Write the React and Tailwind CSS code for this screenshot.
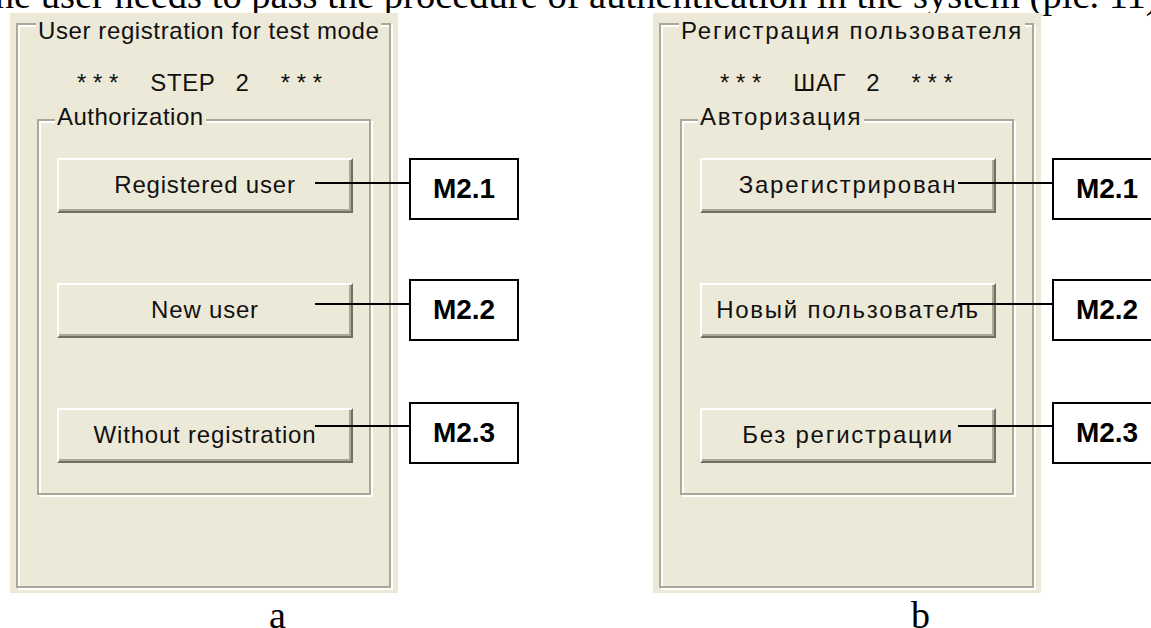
import React from 'react';

const SANS = "font-['Liberation_Sans',Arial,sans-serif]";
const SERIF = "font-['Liberation_Serif','Times_New_Roman',serif]";

const figures = [
  {
    caption: 'a',
    title: 'User registration for test mode',
    step: 'STEP',
    group: 'Authorization',
    buttons: ['Registered user', 'New user', 'Without registration'],
    titleTrack: 'tracking-[0.6px]',
    groupTrack: 'tracking-[0.5px]',
    btnTrack: 'tracking-[0.8px]',
  },
  {
    caption: 'b',
    title: 'Регистрация пользователя',
    step: 'ШАГ',
    group: 'Авторизация',
    buttons: ['Зарегистрирован', 'Новый пользователь', 'Без регистрации'],
    titleTrack: 'tracking-[1.8px]',
    groupTrack: 'tracking-[1.7px]',
    btnTrack: 'tracking-[1.75px]',
  },
];

const marks = ['M2.1', 'M2.2', 'M2.3'];
const markGaps = ['mt-[145px]', 'mt-[59px]', 'mt-[61px]'];
const leaderTops = ['top-[169px]', 'top-[290px]', 'top-[412px]'];

const WinButton = ({ label, track }) => (
  <div className={`w-[296px] h-[55px] flex items-center justify-center bg-[#ece9d8] border-2 border-t-white border-l-white border-r-[#716f64] border-b-[#716f64] shadow-[inset_-2px_-2px_0_#aca899] text-[24px] whitespace-nowrap text-[#111] ${track}`}>
    {label}
  </div>
);

const Figure = ({ fig }) => (
  <div className="flex flex-col w-[509px] shrink-0">
    <div className="relative flex gap-[11px]">
      {/* dialog panel */}
      <div className={`w-[388px] h-[580px] shrink-0 bg-[#ece9d8] pt-[10px] pl-[6px] pr-[7px] pb-[5px] ${SANS} text-[#111]`}>
        <div className="relative h-full border-2 border-[#aca899] shadow-[inset_2px_2px_0_#fff,2px_2px_0_#fff]">
          <span className={`absolute left-[18px] -top-[6px] px-[2px] bg-[#ece9d8] text-[24px] leading-none whitespace-nowrap ${fig.titleTrack}`}>
            {fig.title}
          </span>

          <div className="pt-[46px] pl-[59px] flex items-baseline text-[24px] leading-none">
            <span>* * *</span>
            <span className="ml-[32px] tracking-[0.6px]">{fig.step}</span>
            <span className="ml-[20px]">2</span>
            <span className="ml-[32px]">* * *</span>
          </div>

          <div className="relative mt-[24px] ml-[19px] w-[334px] h-[376px] border-2 border-[#aca899] shadow-[inset_2px_2px_0_#fff,2px_2px_0_#fff]">
            <span className={`absolute left-[16px] -top-[16px] px-[2px] bg-[#ece9d8] text-[24px] leading-none whitespace-nowrap ${fig.groupTrack}`}>
              {fig.group}
            </span>
            <div className="flex flex-col gap-[70px] pt-[37px] pl-[18px]">
              {fig.buttons.map((b) => (
                <WinButton key={b} label={b} track={fig.btnTrack} />
              ))}
            </div>
          </div>
        </div>
      </div>

      {/* callout boxes */}
      <div className="flex flex-col w-[110px] shrink-0">
        {marks.map((m, i) => (
          <div
            key={m}
            className={`${markGaps[i]} w-[110px] h-[62px] shrink-0 border-2 border-black bg-white flex items-center justify-center ${SANS} font-bold text-[28px] text-black`}
          >
            {m}
          </div>
        ))}
      </div>

      {/* leader lines */}
      {leaderTops.map((t) => (
        <div key={t} className={`absolute left-[305px] ${t} w-[94px] h-[2px] bg-black`} />
      ))}
    </div>

    <div className={`mt-[3px] pl-[26px] text-center ${SERIF} text-[38px] leading-none text-black`}>
      {fig.caption}
    </div>
  </div>
);

export default function App() {
  return (
    <div className="w-[1151px] h-[628px] overflow-hidden bg-white">
      <p className={`-mt-[24px] -ml-[16px] whitespace-nowrap ${SERIF} text-[38.5px] leading-none text-black`}>
        the user needs to pass the procedure of authentication in the system (pic. 11).
      </p>
      <div className="flex gap-[134px] ml-[10px] -mt-[2px]">
        {figures.map((f) => (
          <Figure key={f.caption} fig={f} />
        ))}
      </div>
    </div>
  );
}
